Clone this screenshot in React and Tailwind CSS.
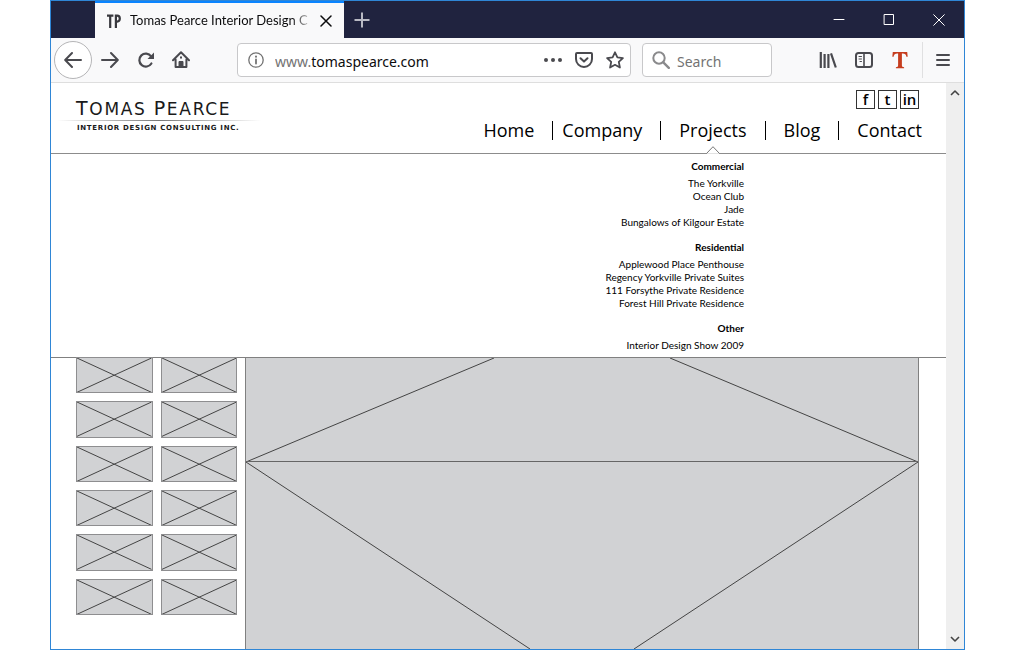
import React from "react";

const strokeIcon = {
  fill: "none",
  stroke: "currentColor",
  strokeLinecap: "round",
  strokeLinejoin: "round",
};

function TitleBar() {
  return (
    <div className="flex h-[37px] shrink-0 items-stretch bg-[#20233f] text-white">
      <div className="ml-11 flex w-[249px] items-center border-t-2 border-[#0a84ff] bg-[#f9f9fa] pl-3 pr-2.5 text-[#0c0c0d]">
        <svg viewBox="0 0 14 14" className="mr-[9px] h-3.5 w-3.5 shrink-0" fill="none" stroke="#38383d" strokeWidth="2.2" aria-hidden="true">
          <path d="M0 1.6h6.4M3.2 1.6V14M8.9 14V1.6h1.3c1.7 0 2.6 1.2 2.6 3s-.9 3-2.6 3H8.9" />
        </svg>
        <span className="min-w-0 flex-1 whitespace-nowrap font-['Lato',sans-serif] text-[13px]">
          <span className="bg-linear-to-r from-[#0c0c0d] from-90% to-[#bbb] bg-clip-text text-transparent">
            Tomas Pearce Interior Design C
          </span>
        </span>
        <button type="button" aria-label="Close tab" className="ml-1 flex h-4 w-4 shrink-0 items-center justify-center">
          <svg viewBox="0 0 12 12" className="h-3 w-3" {...strokeIcon} strokeWidth="1.5">
            <path d="M1 1l10 10M11 1L1 11" />
          </svg>
        </button>
      </div>
      <button type="button" aria-label="New tab" className="flex w-9 items-center justify-center text-[#b9bac4]">
        <svg viewBox="0 0 16 16" className="h-4 w-4" {...strokeIcon} strokeWidth="2" strokeLinecap="butt">
          <path d="M8 .5v15M.5 8h15" />
        </svg>
      </button>
      <div className="ml-auto flex">
        <button type="button" aria-label="Minimize" className="flex w-[50px] items-center justify-center">
          <svg viewBox="0 0 12 12" className="h-3 w-3" {...strokeIcon}>
            <path d="M1 5.500h10" />
          </svg>
        </button>
        <button type="button" aria-label="Maximize" className="flex w-[50px] items-center justify-center">
          <svg viewBox="0 0 12 12" className="h-3 w-3" {...strokeIcon}>
            <path d="M1.500.5h9v10h-9z" />
          </svg>
        </button>
        <button type="button" aria-label="Close window" className="flex w-[50px] items-center justify-center">
          <svg viewBox="0 0 12 12" className="h-3 w-3" {...strokeIcon}>
            <path d="M.7.7l10.600 10.600M11.300.7L.7 11.300" />
          </svg>
        </button>
      </div>
    </div>
  );
}

function ToolButton({ label, children, className = "w-9" }) {
  return (
    <button type="button" aria-label={label} className={"flex h-9 shrink-0 items-center justify-center " + className}>
      {children}
    </button>
  );
}

function Toolbar() {
  return (
    <div className="flex h-[45px] shrink-0 items-center border-b border-[#dedede] bg-[#f9f9fa] pl-[3px] pr-0.5 text-[#4a4a4f]">
      <button type="button" aria-label="Back" className="flex h-[38px] w-[38px] shrink-0 items-center justify-center rounded-full border border-[#b5b5b7] bg-white">
        <svg viewBox="0 0 18 18" className="h-[18px] w-[18px]" {...strokeIcon} strokeWidth="2">
          <path d="M17 9H1.500M8 2L1.200 9 8 16" />
        </svg>
      </button>
      <ToolButton label="Forward">
        <svg viewBox="0 0 18 18" className="h-[18px] w-[18px]" {...strokeIcon} strokeWidth="2">
          <path d="M1 9h15.500M10 2l6.800 7-6.800 7" />
        </svg>
      </ToolButton>
      <ToolButton label="Reload">
        <svg viewBox="0 0 18 18" className="h-[18px] w-[18px]" {...strokeIcon} strokeWidth="2.200">
          <path d="M14.400 12.500a6.500 6.500 0 1 1-.3-7.200" />
          <path d="M17 1.500V8h-6.500z" fill="currentColor" stroke="none" />
        </svg>
      </ToolButton>
      <ToolButton label="Home" className="w-[34px]">
        <svg viewBox="0 0 18 18" className="h-[18px] w-[18px]" {...strokeIcon} strokeWidth="2">
          <path d="M1 9.200L9 1.300l8 7.900M3.600 8.500V16h10.800V8.500" />
          <path d="M7 16v-5.500h4V16" fill="currentColor" strokeWidth="1" />
          <path d="M9 6.200v.6" />
        </svg>
      </ToolButton>
      <div className="ml-[39px] flex h-[34px] min-w-0 flex-1 items-center rounded-sm border border-[#c8c8ca] bg-white px-2.5">
        <svg viewBox="0 0 16 16" className="h-4 w-4 shrink-0 text-[#737373]" {...strokeIcon} strokeWidth="1.300" aria-hidden="true">
          <circle cx="8" cy="8" r="7.200" />
          <path d="M8 7.500v4" strokeWidth="1.800" />
          <path d="M8 4.600v.1" strokeWidth="2" />
        </svg>
        <span className="ml-[11px] min-w-0 flex-1 truncate pt-0.5 font-['Noto_Sans',sans-serif] text-[14px] text-[#0c0c0d]">
          <span className="text-[#737373]">www.</span>tomaspearce.com
        </span>
        <button type="button" aria-label="Page actions" className="mr-[13px] shrink-0">
          <svg viewBox="0 0 18 18" className="h-[18px] w-[18px]" fill="currentColor">
            <circle cx="2" cy="9" r="2" />
            <circle cx="9" cy="9" r="2" />
            <circle cx="16" cy="9" r="2" />
          </svg>
        </button>
        <button type="button" aria-label="Save to Pocket" className="mr-[13px] shrink-0">
          <svg viewBox="0 0 18 18" className="h-[18px] w-[18px]" {...strokeIcon} strokeWidth="2">
            <path d="M2 2h14a1 1 0 0 1 1 1v5a8 8 0 0 1-16 0V3a1 1 0 0 1 1-1z" />
            <path d="M5.500 7.300L9 10.600l3.500-3.300" />
          </svg>
        </button>
        <button type="button" aria-label="Bookmark" className="-mr-1 shrink-0">
          <svg viewBox="0 0 18 18" className="h-[18px] w-[18px]" {...strokeIcon} strokeWidth="1.800">
            <path d="M9 1.300l2.400 5.100 5.500.7-4.100 3.800 1.100 5.600L9 13.800l-4.900 2.700 1.100-5.600L1.100 7.100l5.500-.7z" />
          </svg>
        </button>
      </div>
      <label className="ml-[11px] flex h-[34px] w-[130px] shrink-0 items-center rounded-sm border border-[#c8c8ca] bg-white px-[9px]">
        <svg viewBox="0 0 18 18" className="h-[18px] w-[18px] shrink-0 text-[#8a8a8c]" {...strokeIcon} strokeWidth="2" aria-hidden="true">
          <circle cx="7" cy="7" r="5.700" />
          <path d="M11.300 11.300l5.500 5.500" strokeWidth="2.400" />
        </svg>
        <input type="text" aria-label="Search" placeholder="Search" className="ml-[7px] w-full min-w-0 bg-transparent pt-0.5 font-['Noto_Sans',sans-serif] text-[14px] outline-none placeholder:text-[#737373]" />
      </label>
      <div className="ml-[38px] flex shrink-0 items-center">
        <ToolButton label="Library">
          <svg viewBox="0 0 18 18" className="h-[18px] w-[18px]" {...strokeIcon} strokeWidth="2.200" strokeLinecap="butt">
            <path d="M1.800 1v16M5.600 3v14M9.400 3v14M12 2.300L16.800 16.500" />
          </svg>
        </ToolButton>
        <ToolButton label="Sidebars">
          <svg viewBox="0 0 18 18" className="h-[18px] w-[18px]" {...strokeIcon} strokeWidth="2">
            <rect x="1" y="2" width="16" height="14" rx="2.500" />
            <path d="M9 2v14" strokeWidth="1.600" />
            <path d="M4 5.500h2.500M4 8h2.500M5 10.500h1.500" strokeWidth="1" />
          </svg>
        </ToolButton>
        <ToolButton label="Text tool">
          <svg viewBox="0 0 16 18" className="h-[18px] w-4 text-[#c63d1e]" fill="currentColor">
            <path d="M.8 1h14.400l.5 4.800h-1.300C14 3.500 13 2.600 10.700 2.600H9.900v11.700c0 1.400.5 1.800 2.200 1.900v1H3.900v-1c1.700-.1 2.200-.5 2.200-1.900V2.600h-.8C3 2.600 2 3.500 1.600 5.800H.3z" />
          </svg>
        </ToolButton>
        <ToolButton label="Open menu" className="ml-1 w-10 border-l border-[#e0e0e1]">
          <svg viewBox="0 0 14 14" className="h-3.5 w-3.5" {...strokeIcon} strokeWidth="2">
            <path d="M1 2h12M1 7h12M1 12h12" />
          </svg>
        </ToolButton>
      </div>
    </div>
  );
}

function Logo() {
  return (
    <a href="#home" className="mt-[15px] block w-[204px] whitespace-nowrap font-['DejaVu_Sans',sans-serif] text-[#1a1a1a]">
      <span className="block pl-[19px] text-[17px] leading-[21px] tracking-widest">
        <span className="text-[19px]">T</span>OMAS <span className="text-[19px]">P</span>EARCE
      </span>
      <span className="block h-px bg-linear-to-r from-transparent via-[#777] to-transparent" />
      <span className="block pl-5 pt-0.5 text-[7px] font-bold leading-[10px] tracking-widest">
        INTERIOR DESIGN CONSULTING INC.
      </span>
    </a>
  );
}

const navItems = ["Home", "Company", "Projects", "Blog", "Contact"];

function SiteHeader() {
  return (
    <header className="flex h-[71px] items-start justify-between border-b border-[#8c8c8c] pl-[6px] pr-6">
      <Logo />
      <div className="flex h-full flex-col items-end pt-[7px]">
        <div className="mr-[3px] flex gap-[3px]">
          {["f", "t", "in"].map((label) => (
            <a key={label} href={"#" + label} className="flex h-[19px] w-[19px] items-center justify-center border border-[#333] pb-px text-[15px] font-semibold leading-4 text-black">
              {label}
            </a>
          ))}
        </div>
        <nav className="flex flex-1 text-[18px] leading-6 text-black">
          {navItems.map((item, i) => (
            <React.Fragment key={item}>
              {i > 0 && (
                <span className={"mt-3 h-[19px] w-px bg-black " + (i === 1 ? "ml-[18px] mr-[9px]" : "mx-[18px]")} />
              )}
              <a href={"#" + item} className="relative pt-[9px]">
                {item}
                {item === "Projects" && (
                  <svg viewBox="0 0 14 8" className="absolute -bottom-px left-1/2 h-2 w-3.5 -translate-x-1/2" aria-hidden="true">
                    <path d="M.5 7.500L7 .7l6.500 6.800" fill="#fff" stroke="#777" />
                    <path d="M1 8h12" stroke="#fff" />
                  </svg>
                )}
              </a>
            </React.Fragment>
          ))}
        </nav>
      </div>
    </header>
  );
}

const groups = [
  { title: "Commercial", items: ["The Yorkville", "Ocean Club", "Jade", "Bungalows of Kilgour Estate"] },
  {
    title: "Residential",
    items: [
      "Applewood Place Penthouse",
      "Regency Yorkville Private Suites",
      "111 Forsythe Private Residence",
      "Forest Hill Private Residence",
    ],
  },
  { title: "Other", items: ["Interior Design Show 2009"] },
];

function ProjectsMenu() {
  return (
    <section className="flex flex-col gap-3 border-b border-[#808080] pb-[5px] pr-[202px] pt-[6px] text-right font-['Lato',sans-serif] text-[10px] leading-[13px] text-black">
      {groups.map((group) => (
        <div key={group.title}>
          <h2 className="mb-1 font-bold text-black">{group.title}</h2>
          <ul>
            {group.items.map((item) => (
              <li key={item}>
                <a href={"#" + item}>{item}</a>
              </li>
            ))}
          </ul>
        </div>
      ))}
    </section>
  );
}

function Thumb() {
  return (
    <svg viewBox="0 0 77 37" preserveAspectRatio="none" className="h-full w-full border border-[#8e8e90] bg-[#d1d2d4]" fill="none" stroke="#444" aria-hidden="true">
      <path d="M0 0l77 37M77 0L0 37" vectorEffect="non-scaling-stroke" />
    </svg>
  );
}

function Gallery() {
  return (
    <div className="-mt-px flex min-h-0 flex-1 gap-2 pl-[25px] pr-[27px]">
      <div className="grid h-[258px] w-[161px] shrink-0 grid-cols-2 grid-rows-6 gap-2">
        {Array.from({ length: 12 }, (_, i) => (
          <Thumb key={i} />
        ))}
      </div>
      <div className="min-w-0 flex-1 border-x border-t border-[#808080] bg-[#d1d2d4]">
        <svg viewBox="0 0 672 291" preserveAspectRatio="none" className="block h-full w-full" fill="none" stroke="#444" aria-hidden="true">
          <path d="M248 0L0 104l284 187M424 0l248 104-284 187" vectorEffect="non-scaling-stroke" />
          <path d="M0 103.500h672" stroke="#666" vectorEffect="non-scaling-stroke" />
        </svg>
      </div>
    </div>
  );
}

function ScrollBar() {
  return (
    <div className="flex w-[18px] shrink-0 flex-col items-center justify-between bg-[#efefef] py-1.5 text-[#444]">
      <button type="button" aria-label="Scroll up">
        <svg viewBox="0 0 10 8" className="block h-2 w-2.5" {...strokeIcon} strokeWidth="1.600" strokeLinecap="butt">
          <path d="M1 6l4-4 4 4" />
        </svg>
      </button>
      <button type="button" aria-label="Scroll down">
        <svg viewBox="0 0 10 8" className="block h-2 w-2.5" {...strokeIcon} strokeWidth="1.600" strokeLinecap="butt">
          <path d="M1 2l4 4 4-4" />
        </svg>
      </button>
    </div>
  );
}

export default function App() {
  return (
    <div className="h-screen bg-white px-[50px] font-['Open_Sans','Noto_Sans',sans-serif]">
      <div className="flex h-full flex-col overflow-hidden border border-[#2f86d6]">
        <TitleBar />
        <Toolbar />
        <div className="flex min-h-0 flex-1">
          <main className="flex min-w-0 flex-1 flex-col">
            <SiteHeader />
            <ProjectsMenu />
            <Gallery />
          </main>
          <ScrollBar />
        </div>
      </div>
    </div>
  );
}
